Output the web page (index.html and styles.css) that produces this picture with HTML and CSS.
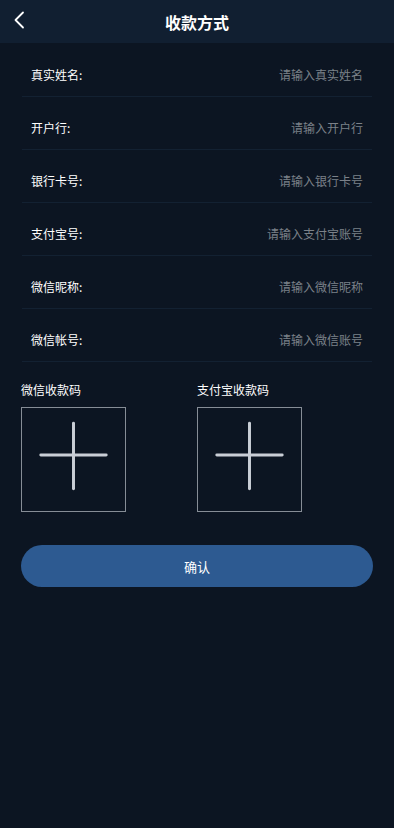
FILE: index.html
```html
<!DOCTYPE html>
<html lang="zh">
<head>
<meta charset="utf-8">
<link rel="stylesheet" href="styles.css">
</head>
<body>
<div class="page">
  <header class="topbar">
    <svg class="back" width="12" height="18" viewBox="0 0 12 18"><path d="M10 1.5 L2.5 9 L10 16.5" fill="none" stroke="#ffffff" stroke-width="1.8" stroke-linecap="round" stroke-linejoin="round"/></svg>
    <h1 class="title">收款方式</h1>
  </header>
  <div class="form">
    <div class="row"><span class="label">真实姓名:</span><span class="ph">请输入真实姓名</span></div>
    <div class="row"><span class="label">开户行:</span><span class="ph">请输入开户行</span></div>
    <div class="row"><span class="label">银行卡号:</span><span class="ph">请输入银行卡号</span></div>
    <div class="row"><span class="label">支付宝号:</span><span class="ph">请输入支付宝账号</span></div>
    <div class="row"><span class="label">微信昵称:</span><span class="ph">请输入微信昵称</span></div>
    <div class="row"><span class="label">微信帐号:</span><span class="ph">请输入微信账号</span></div>
  </div>
  <div class="uploads">
    <div class="up">
      <div class="up-label">微信收款码</div>
      <div class="box"><svg width="104" height="104" viewBox="0 0 104 104"><path d="M52 15 V81 M19 47 H85" stroke="#c9ced6" stroke-width="3" stroke-linecap="round" fill="none"/></svg></div>
    </div>
    <div class="up">
      <div class="up-label">支付宝收款码</div>
      <div class="box"><svg width="104" height="104" viewBox="0 0 104 104"><path d="M52 15 V81 M19 47 H85" stroke="#c9ced6" stroke-width="3" stroke-linecap="round" fill="none"/></svg></div>
    </div>
  </div>
  <div class="btn-wrap"><button class="btn">确认</button></div>
</div>
</body>
</html>
```
FILE: styles.css
```css
* { box-sizing: border-box; }
html, body { margin: 0; padding: 0; }
body {
  background: #0c1522;
  font-family: "Noto Sans CJK SC", "Noto Sans", sans-serif;
  color: #ffffff;
  width: 394px;
  min-height: 828px;
}
.topbar {
  height: 43px;
  background: #111f31;
  display: flex;
  align-items: center;
  justify-content: center;
  position: relative;
}
.back {
  position: absolute;
  left: 13px;
  top: 11px;
}
.title {
  margin: 0;
  font-size: 16px;
  font-weight: 700;
  line-height: 20px;
  color: #ffffff;
}
.form {
  padding: 1px 22px 0 22px;
}
.row {
  display: flex;
  justify-content: space-between;
  align-items: center;
  padding: 23px 9px 13px 9px;
  border-bottom: 1px solid #132132;
  height: 53px;
  font-size: 12px;
  line-height: 16px;
}
.label { color: #ffffff; }
.ph { color: #7b8189; }
.uploads {
  display: flex;
  gap: 71px;
  padding: 20px 21px 0 21px;
}
.up-label {
  font-size: 12px;
  line-height: 16px;
  color: #ffffff;
  margin-bottom: 9px;
}
.box {
  width: 105px;
  height: 105px;
  border: 1px solid #868d96;
  display: flex;
  align-items: center;
  justify-content: center;
}
.box svg { display: block; }
.btn-wrap {
  padding: 33px 21px 0 21px;
}
.btn {
  width: 352px;
  height: 42px;
  border: none;
  border-radius: 21px;
  background: #2d5a91;
  color: #ffffff;
  font-family: "Noto Sans CJK SC", "Noto Sans", sans-serif;
  font-size: 13px;
  display: block;
}
```
